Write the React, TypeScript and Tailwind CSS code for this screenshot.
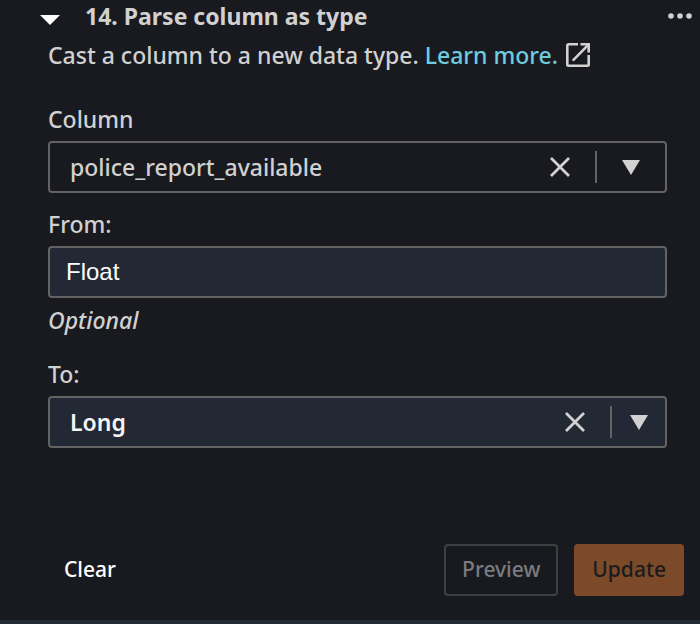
import { useState } from "react";
import clsx from "clsx";

type PickerProps = {
  id: string;
  label: string;
  options: string[];
  value: string;
  onChange: (value: string) => void;
  filled?: boolean;
};

function Picker({ id, label, options, value, onChange, filled }: PickerProps) {
  return (
    <>
      <label htmlFor={id} className="mb-1.5 block leading-8">
        {label}
      </label>
      <div
        className={clsx(
          "flex h-13 items-center rounded border-2 border-[#636363]",
          filled ? "bg-[#222934]" : "bg-transparent"
        )}
      >
        <select
          id={id}
          value={value}
          onChange={(e) => onChange(e.target.value)}
          className={clsx(
            "h-full min-w-0 flex-1 appearance-none bg-transparent pl-5 outline-none",
            filled && "font-semibold text-[#f5f5f5]"
          )}
        >
          <option value=""></option>
          {options.map((option) => (
            <option key={option}>{option}</option>
          ))}
        </select>
        <button
          type="button"
          aria-label={`Clear ${label}`}
          onClick={() => onChange("")}
          className="flex h-full w-[70px] items-center justify-center"
        >
          <svg width="20" height="20" viewBox="0 0 20 20" fill="none" stroke="currentColor" strokeWidth="2.8">
            <path d="M1 1l18 18M19 1L1 19" />
          </svg>
        </button>
        <div className="h-8 w-0.5 bg-[#636363]" />
        <div className={clsx("flex justify-center", filled ? "w-[53px]" : "w-[68px]")}>
          <svg width="18" height="15" viewBox="0 0 18 15" fill="currentColor">
            <path d="M0 0h18L9 15z" />
          </svg>
        </div>
      </div>
    </>
  );
}

export default function App() {
  const [open, setOpen] = useState(true);
  const [column, setColumn] = useState("police_report_available");
  const [from, setFrom] = useState("Float");
  const [to, setTo] = useState("Long");

  function clear() {
    setColumn("");
    setFrom("");
    setTo("");
  }

  return (
    <div className="min-h-screen bg-[#191a1f] font-['Noto_Sans',sans-serif] text-[23px] font-medium text-[#d1d1d1]">
      {/* Step header */}
      <div className="flex h-8 items-center pr-2 pl-10">
        <button
          type="button"
          aria-label="Toggle step"
          aria-expanded={open}
          onClick={() => setOpen(!open)}
          className="mt-2 mr-[25px] text-white"
        >
          <svg width="20" height="10" viewBox="0 0 20 10" fill="currentColor">
            <path d="M0 0h20L10 10z" />
          </svg>
        </button>
        <h2 className="flex-1 font-bold">14. Parse column as type</h2>
        <button type="button" aria-label="More actions">
          <svg width="24" height="6" viewBox="0 0 24 6" fill="currentColor">
            <circle cx="3" cy="3" r="2.8" />
            <circle cx="12" cy="3" r="2.8" />
            <circle cx="21" cy="3" r="2.8" />
          </svg>
        </button>
      </div>

      {open && (
        <form onSubmit={(e) => e.preventDefault()}>
          <div className="pr-[33px] pl-12">
            <p className="flex h-[46px] items-center whitespace-pre">
              Cast a column to a new data type.{" "}
              <a href="#learn-more" className="flex items-center text-[#6fcbdf]">
                Learn more.
                <svg
                  width="24"
                  height="24"
                  viewBox="0 0 24 24"
                  fill="none"
                  stroke="currentColor"
                  strokeWidth="2.6"
                  className="ml-2 text-[#d1d1d1]"
                >
                  <path d="M12 1.3H2.5a1.2 1.2 0 0 0-1.2 1.2v19a1.2 1.2 0 0 0 1.2 1.2h19a1.2 1.2 0 0 0 1.2-1.2V12" />
                  <path d="M7.5 16.8L22 2.2" strokeLinecap="round" />
                  <path d="M14.5 1.3h8.2v8.2" />
                </svg>
              </a>
            </p>

            <div className="mt-[25px]">
              <Picker
                id="column"
                label="Column"
                options={["police_report_available"]}
                value={column}
                onChange={setColumn}
              />
            </div>

            <div className="mt-[15px]">
              <label htmlFor="from" className="mb-1.5 block leading-8">
                From:
              </label>
              <input
                id="from"
                type="text"
                value={from}
                onChange={(e) => setFrom(e.target.value)}
                className="block h-13 w-full rounded border-2 border-[#636363] bg-[#222934] px-4 font-['Liberation_Sans',sans-serif] text-2xl font-normal text-white outline-none"
              />
              <p className="mt-1.5 leading-8 italic">Optional</p>
            </div>

            <div className="mt-[22px]">
              <Picker
                id="to"
                label="To:"
                options={["Long", "Float", "Boolean", "Date", "String"]}
                value={to}
                onChange={setTo}
                filled
              />
            </div>
          </div>

          {/* Footer actions */}
          <div className="mt-24 flex items-center pr-4 pb-6 pl-12 text-[21px]">
            <button type="button" onClick={clear} className="mr-auto h-13 px-4 text-white">
              Clear
            </button>
            <button
              type="button"
              disabled
              className="mr-4 h-13 rounded border-2 border-[#3e3f41] px-4 text-[#7b7c7f]"
            >
              Preview
            </button>
            <button type="submit" disabled className="h-13 rounded bg-[#7c4a29] px-[18px] text-[#1a1b1f]">
              Update
            </button>
          </div>
          <div className="h-1 bg-[#222934]" />
        </form>
      )}
    </div>
  );
}
